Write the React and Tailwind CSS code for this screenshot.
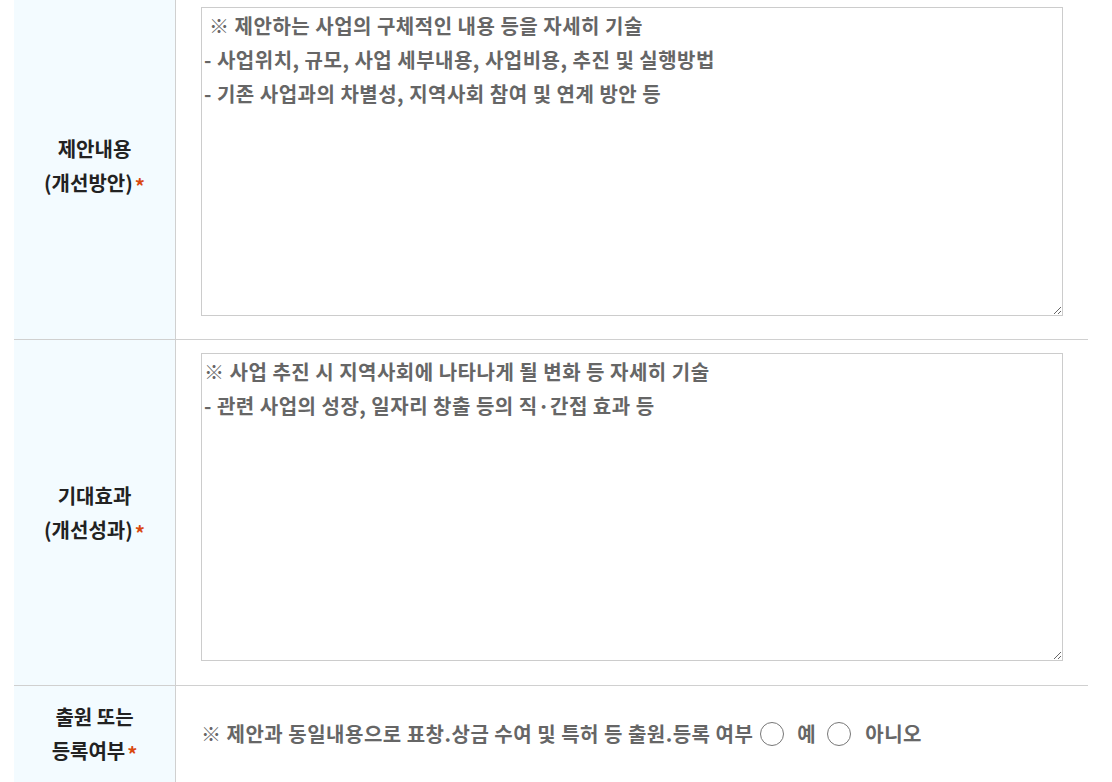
export default function App() {
  const font = { fontFamily: '"Noto Sans CJK KR", "Noto Sans", sans-serif' };
  const Star = () => <span className="text-[#d9480f] text-[20px] leading-none relative top-[3px] ml-[2px]">*</span>;
  return (
    <div className="w-[1112px] h-[782px] overflow-hidden bg-white" style={font}>
      <div className="ml-[14px] w-[1074px] -mt-[7px]">
        <div className="flex border-b border-[#d0d0d0]">
          <div className="w-[162px] shrink-0 bg-[#f3fbff] border-r border-[#d0d0d0] flex flex-col items-center justify-center text-[20px] font-bold leading-[34px] text-[#222]">
            <div>제안내용</div>
            <div>(개선방안)<Star /></div>
          </div>
          <div className="flex-1 pl-[25px] pr-[25px] pt-[14px] pb-[23px]">
            <textarea
              className="block w-[862px] h-[309px] border border-[#cccccc] px-[2px] pt-[1px] text-[20px] tracking-[0.5px] font-bold leading-[34px] text-[#666] placeholder:text-[#666] outline-none"
              placeholder={" ※ 제안하는 사업의 구체적인 내용 등을 자세히 기술\n- 사업위치, 규모, 사업 세부내용, 사업비용, 추진 및 실행방법\n- 기존 사업과의 차별성, 지역사회 참여 및 연계 방안 등"}
            />
          </div>
        </div>
        <div className="flex border-b border-[#d0d0d0]">
          <div className="w-[162px] shrink-0 bg-[#f3fbff] border-r border-[#d0d0d0] flex flex-col items-center justify-center text-[20px] font-bold leading-[34px] text-[#222]">
            <div>기대효과</div>
            <div>(개선성과)<Star /></div>
          </div>
          <div className="flex-1 pl-[25px] pr-[25px] pt-[13px] pb-[24px]">
            <textarea
              className="block w-[862px] h-[308px] border border-[#cccccc] px-[2px] pt-[1px] text-[20px] tracking-[0.5px] font-bold leading-[34px] text-[#666] placeholder:text-[#666] outline-none"
              placeholder={"※ 사업 추진 시 지역사회에 나타나게 될 변화 등 자세히 기술\n- 관련 사업의 성장, 일자리 창출 등의 직·간접 효과 등"}
            />
          </div>
        </div>
        <div className="flex">
          <div className="w-[162px] shrink-0 bg-[#f3fbff] border-r border-[#d0d0d0] flex flex-col items-center justify-center text-[20px] font-bold leading-[34px] text-[#222] py-[14px]">
            <div>출원 또는</div>
            <div>등록여부<Star /></div>
          </div>
          <div className="flex-1 pl-[25px] flex items-center text-[20px] tracking-[0.5px] font-bold text-[#666]">
            <span>※ 제안과 동일내용으로 표창.상금 수여 및 특허 등 출원.등록 여부</span>
            <label className="flex items-center ml-[7px]">
              <span className="w-[24px] h-[24px] rounded-full border-[1.5px] border-[#777] bg-white inline-block"></span>
              <span className="ml-[13px]">예</span>
            </label>
            <label className="flex items-center ml-[11px]">
              <span className="w-[24px] h-[24px] rounded-full border-[1.5px] border-[#777] bg-white inline-block"></span>
              <span className="ml-[14px]">아니오</span>
            </label>
          </div>
        </div>
      </div>
    </div>
  );
}
